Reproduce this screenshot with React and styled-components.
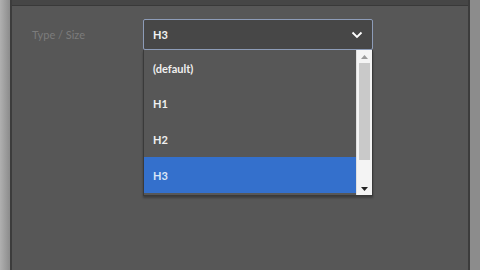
import React from 'react';
import styled, { createGlobalStyle } from 'styled-components';

const GlobalStyle = createGlobalStyle`
  html, body {
    margin: 0;
    padding: 0;
    width: 480px;
    height: 270px;
    overflow: hidden;
    background: #9a9a9a;
    font-family: Lato, "Liberation Sans", sans-serif;
  }
`;

const Screen = styled.div`
  width: 480px;
  height: 270px;
  display: flex;
  background: linear-gradient(to right, #b0b0b0 0, #8c8c8c 10px, #8c8c8c 100%);
`;

const Window = styled.div`
  margin-left: 10px;
  width: 460px;
  height: 270px;
  display: flex;
  flex-direction: column;
  border-left: 2px solid #3c3c3c;
  border-right: 2px solid #3c3c3c;
  box-sizing: border-box;
  background: #575757;
`;

const TitleBar = styled.div`
  height: 5px;
  background: #464646;
  border-bottom: 1px solid #393939;
`;

const Body = styled.div`
  flex: 1;
  padding: 13px 0 0 20px;
`;

const Row = styled.div`
  display: flex;
  align-items: flex-start;
`;

const Label = styled.div`
  width: 111px;
  padding-top: 9px;
  font-size: 11px;
  color: #7c7c7c;
`;

const Field = styled.div`
  position: relative;
  width: 230px;
`;

const SelectBox = styled.div`
  height: 31px;
  box-sizing: border-box;
  border: 1px solid #8d9cb8;
  border-radius: 2px;
  background: #474747;
  display: flex;
  align-items: center;
  justify-content: space-between;
  padding: 0 9px 0 9px;
  color: #f2f2f2;
  font-size: 11px;
  font-weight: 700;
`;

const Chevron = styled.svg`
  width: 12px;
  height: 8px;
`;

const List = styled.div`
  position: absolute;
  top: 31px;
  left: 0;
  width: 230px;
  height: 146px;
  box-sizing: border-box;
  border: 1px solid #3a3a3a;
  border-top: none;
  background: #575757;
  display: flex;
  box-shadow: 0 2px 2px rgba(0, 0, 0, 0.3);
`;

const Options = styled.div`
  flex: 1;
  display: flex;
  flex-direction: column;
`;

const Option = styled.div`
  height: ${(p) => (p.$short ? '35px' : '36px')};
  flex-shrink: 0;
  display: flex;
  align-items: center;
  padding-left: 9px;
  font-size: 11px;
  font-weight: 700;
  color: ${(p) => (p.$selected ? '#dbe6f7' : '#f0f0f0')};
  background: ${(p) => (p.$selected ? '#3470cc' : 'transparent')};
`;

const Scrollbar = styled.div`
  width: 15px;
  background: #f4f4f4;
  border-left: 1px solid #e0e0e0;
  display: flex;
  flex-direction: column;
  align-items: center;
`;

const Arrow = styled.div`
  height: 13px;
  display: flex;
  align-items: center;
  justify-content: center;
  width: 100%;
`;

const Thumb = styled.div`
  width: 11px;
  height: 97px;
  background: #c9c9c9;
`;

const Track = styled.div`
  flex: 1;
`;

const options = ['(default)', 'H1', 'H2', 'H3'];

export default function App() {
  return (
    <>
      <GlobalStyle />
      <Screen>
        <Window>
          <TitleBar />
          <Body>
            <Row>
              <Label>Type / Size</Label>
              <Field>
                <SelectBox>
                  <span>H3</span>
                  <Chevron viewBox="0 0 12 8">
                    <path d="M1.5 1.5 L6 6 L10.5 1.5" fill="none" stroke="#ffffff" strokeWidth="1.8" />
                  </Chevron>
                </SelectBox>
                <List>
                  <Options>
                    {options.map((o, i) => (
                      <Option key={o} $short={i === 1} $selected={o === 'H3'}>{o}</Option>
                    ))}
                  </Options>
                  <Scrollbar>
                    <Arrow>
                      <svg width="7" height="4" viewBox="0 0 7 4">
                        <path d="M0 4 L3.5 0 L7 4 Z" fill="#9a9a9a" />
                      </svg>
                    </Arrow>
                    <Thumb />
                    <Track />
                    <Arrow>
                      <svg width="7" height="4" viewBox="0 0 7 4">
                        <path d="M0 0 L3.5 4 L7 0 Z" fill="#222" />
                      </svg>
                    </Arrow>
                  </Scrollbar>
                </List>
              </Field>
            </Row>
          </Body>
        </Window>
      </Screen>
    </>
  );
}
